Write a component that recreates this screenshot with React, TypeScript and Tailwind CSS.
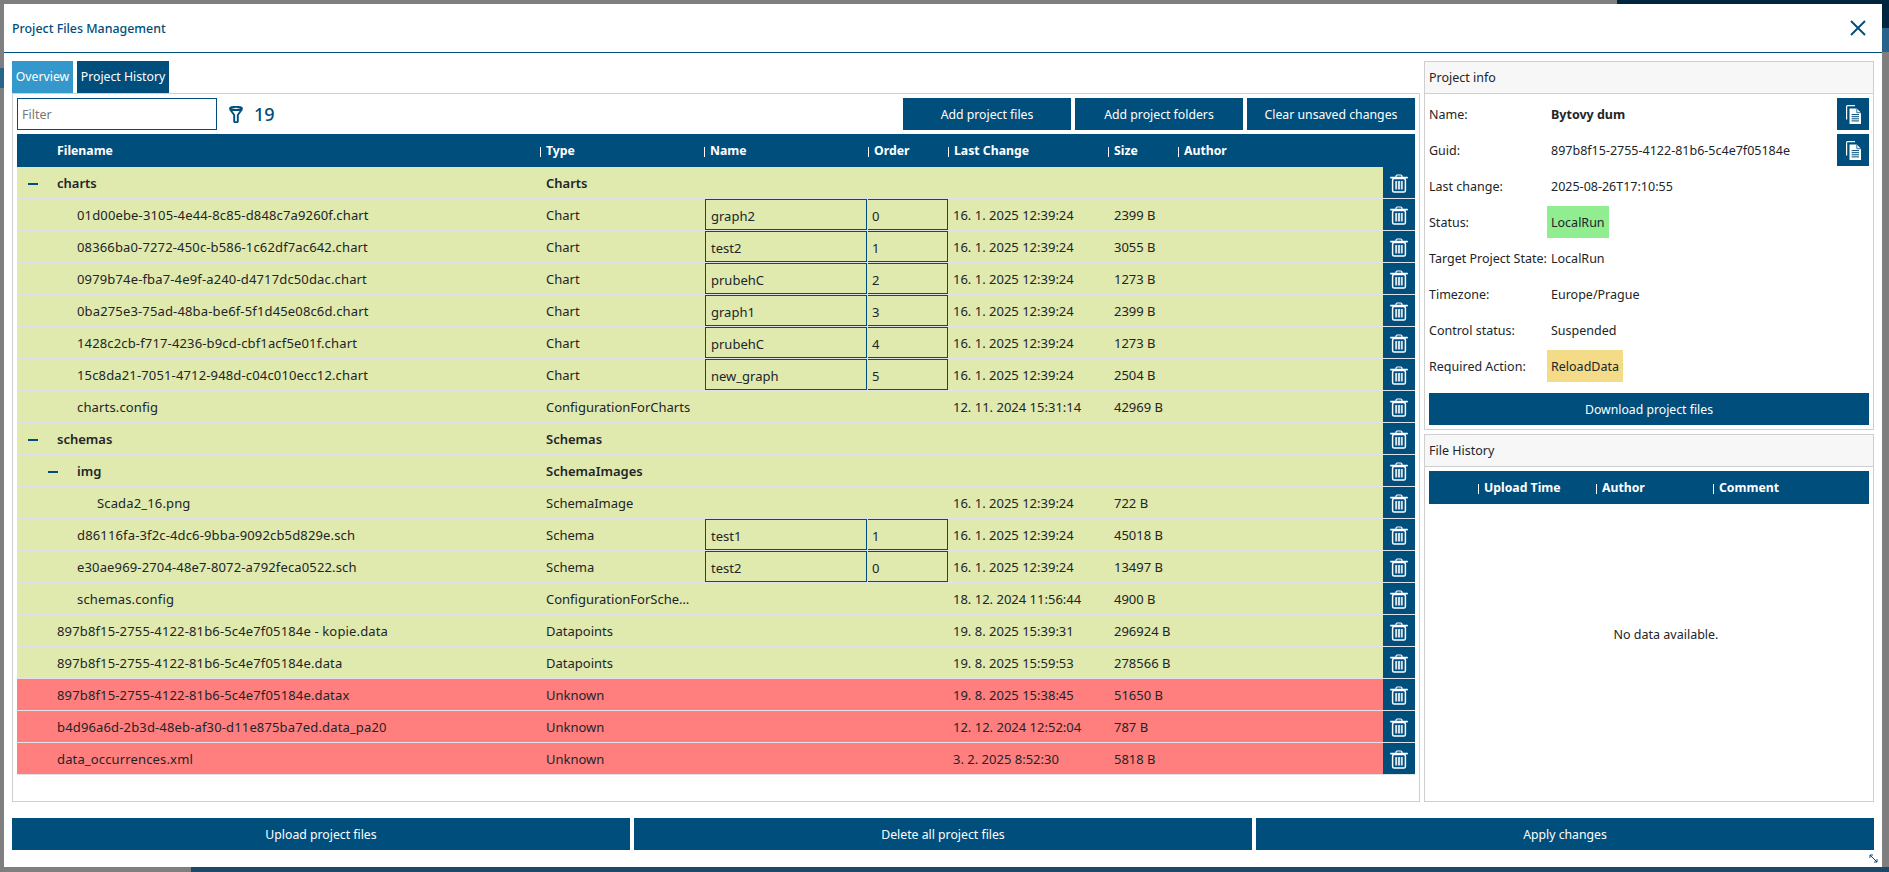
import { ReactNode } from 'react';

type Row = {
  file: string;
  type: string;
  depth: 0 | 1 | 2;
  folder?: boolean;
  name?: string;
  order?: number;
  date?: string;
  size?: string;
  bad?: boolean;
};

const rows: Row[] = [
  { file: 'charts', type: 'Charts', depth: 0, folder: true },
  { file: '01d00ebe-3105-4e44-8c85-d848c7a9260f.chart', type: 'Chart', depth: 1, name: 'graph2', order: 0, date: '16. 1. 2025 12:39:24', size: '2399 B' },
  { file: '08366ba0-7272-450c-b586-1c62df7ac642.chart', type: 'Chart', depth: 1, name: 'test2', order: 1, date: '16. 1. 2025 12:39:24', size: '3055 B' },
  { file: '0979b74e-fba7-4e9f-a240-d4717dc50dac.chart', type: 'Chart', depth: 1, name: 'prubehC', order: 2, date: '16. 1. 2025 12:39:24', size: '1273 B' },
  { file: '0ba275e3-75ad-48ba-be6f-5f1d45e08c6d.chart', type: 'Chart', depth: 1, name: 'graph1', order: 3, date: '16. 1. 2025 12:39:24', size: '2399 B' },
  { file: '1428c2cb-f717-4236-b9cd-cbf1acf5e01f.chart', type: 'Chart', depth: 1, name: 'prubehC', order: 4, date: '16. 1. 2025 12:39:24', size: '1273 B' },
  { file: '15c8da21-7051-4712-948d-c04c010ecc12.chart', type: 'Chart', depth: 1, name: 'new_graph', order: 5, date: '16. 1. 2025 12:39:24', size: '2504 B' },
  { file: 'charts.config', type: 'ConfigurationForCharts', depth: 1, date: '12. 11. 2024 15:31:14', size: '42969 B' },
  { file: 'schemas', type: 'Schemas', depth: 0, folder: true },
  { file: 'img', type: 'SchemaImages', depth: 1, folder: true },
  { file: 'Scada2_16.png', type: 'SchemaImage', depth: 2, date: '16. 1. 2025 12:39:24', size: '722 B' },
  { file: 'd86116fa-3f2c-4dc6-9bba-9092cb5d829e.sch', type: 'Schema', depth: 1, name: 'test1', order: 1, date: '16. 1. 2025 12:39:24', size: '45018 B' },
  { file: 'e30ae969-2704-48e7-8072-a792feca0522.sch', type: 'Schema', depth: 1, name: 'test2', order: 0, date: '16. 1. 2025 12:39:24', size: '13497 B' },
  { file: 'schemas.config', type: 'ConfigurationForSchemas', depth: 1, date: '18. 12. 2024 11:56:44', size: '4900 B' },
  { file: '897b8f15-2755-4122-81b6-5c4e7f05184e - kopie.data', type: 'Datapoints', depth: 0, date: '19. 8. 2025 15:39:31', size: '296924 B' },
  { file: '897b8f15-2755-4122-81b6-5c4e7f05184e.data', type: 'Datapoints', depth: 0, date: '19. 8. 2025 15:59:53', size: '278566 B' },
  { file: '897b8f15-2755-4122-81b6-5c4e7f05184e.datax', type: 'Unknown', depth: 0, date: '19. 8. 2025 15:38:45', size: '51650 B', bad: true },
  { file: 'b4d96a6d-2b3d-48eb-af30-d11e875ba7ed.data_pa20', type: 'Unknown', depth: 0, date: '12. 12. 2024 12:52:04', size: '787 B', bad: true },
  { file: 'data_occurrences.xml', type: 'Unknown', depth: 0, date: '3. 2. 2025 8:52:30', size: '5818 B', bad: true },
];

const info: { label: string; value: string; tone?: string; bold?: boolean; copy?: boolean }[] = [
  { label: 'Name:', value: 'Bytovy dum', bold: true, copy: true },
  { label: 'Guid:', value: '897b8f15-2755-4122-81b6-5c4e7f05184e', copy: true },
  { label: 'Last change:', value: '2025-08-26T17:10:55' },
  { label: 'Status:', value: 'LocalRun', tone: 'bg-[#90ee90]' },
  { label: 'Target Project State:', value: 'LocalRun' },
  { label: 'Timezone:', value: 'Europe/Prague' },
  { label: 'Control status:', value: 'Suspended' },
  { label: 'Required Action:', value: 'ReloadData', tone: 'bg-[#f4db87]' },
];

const columns = 'grid grid-cols-[523px_164px_164px_80px_160px_70px_205px_32px]';

function TrashIcon() {
  return (
    <svg width="18" height="19" viewBox="0 0 18 19" fill="none">
      <path d="M6 3V2.2C6 1.5 6.5 1 7.2 1h3.6c.7 0 1.2.5 1.2 1.2V3" stroke="#fff" strokeWidth="1.2" />
      <path d="M.8 3.6h16.4" stroke="#fff" strokeWidth="1.6" strokeLinecap="round" />
      <rect x="2.6" y="4.6" width="12.8" height="13.4" rx="1.6" stroke="#fff" strokeWidth="1.5" />
      <path d="M5.2 7h2v8.6h-2zM8 7h2v8.6H8zM10.8 7h2v8.6h-2z" fill="#d3e1ea" />
    </svg>
  );
}

function CopyIcon() {
  return (
    <svg width="15" height="19" viewBox="0 0 15 19" fill="none">
      <path d="M9 .6H1.6C1 .6.6 1 .6 1.6v12.8" stroke="#fff" strokeWidth="1.2" />
      <path d="M3.5 3.5h7.3l4.2 4.2V19H3.5z" fill="#fff" />
      <path d="M10.8 3.5v4.2H15" stroke="#004e7c" strokeWidth=".8" />
      <path d="M5.6 9.6h7.4M5.6 11.7h7.4M5.6 13.8h7.4M5.6 15.9h7.4" stroke="#004e7c" strokeWidth="1" />
    </svg>
  );
}

function FunnelIcon() {
  return (
    <svg width="14" height="17" viewBox="0 0 14 17" fill="none">
      <ellipse cx="7" cy="2.4" rx="6" ry="1.6" stroke="#004e7c" strokeWidth="1.9" />
      <path d="M1 3.2l4.2 5.8v6.2c0 .7.5 1.1 1.2 1.1h1.2c.7 0 1.2-.4 1.2-1.1V9L13 3.2" stroke="#004e7c" strokeWidth="1.9" />
    </svg>
  );
}

function CloseIcon() {
  return (
    <svg width="16" height="16" viewBox="0 0 16 16" fill="none">
      <path d="M1 1l14 14M15 1L1 15" stroke="#004e7c" strokeWidth="1.9" />
    </svg>
  );
}

function Resize() {
  return (
    <svg width="9" height="9" viewBox="0 0 9 9" fill="none">
      <path d="M1 1l7 7M1 1v3M1 1h3M8 8V5M8 8H5" stroke="#004e7c" strokeWidth="1" />
    </svg>
  );
}

function Button({ children, className }: { children: ReactNode; className: string }) {
  return (
    <button className={`h-8 pt-0.5 bg-[#004e7c] text-white text-[12.25px] flex items-center justify-center ${className}`}>
      {children}
    </button>
  );
}

function HeaderCell({ label }: { label: string }) {
  return (
    <div className="flex items-center font-bold pt-0.5">
      <span className="w-px h-2.5 bg-white mr-[5px]" />
      {label}
    </div>
  );
}

function FileRow({ row }: { row: Row }) {
  const indent = row.depth === 0 ? 'pl-10' : row.depth === 1 ? 'pl-[60px]' : 'pl-20';
  return (
    <div className={`${columns} h-8 border-b border-[#dfe3e6] text-[13px] text-[#212529] ${row.bad ? 'bg-[#ff7f7f]' : 'bg-[#e0e9ae]'}`}>
      {row.folder ? (
        <div className={`flex items-center pt-0.5 font-semibold ${row.depth === 0 ? 'pl-[11px]' : 'pl-[31px]'}`}>
          <span className="w-2.5 h-0.5 bg-[#004e7c] mr-[19px]" />
          {row.file}
        </div>
      ) : (
        <div className={`flex items-center pt-0.5 tracking-[0.15px] ${indent}`}>{row.file}</div>
      )}
      <div className={`flex items-center pt-0.5 pl-1.5 pr-2 min-w-0 ${row.folder ? 'font-semibold' : ''}`}>
        <span className="truncate">{row.type}</span>
      </div>
      <div className="flex px-px">
        {row.name && (
          <div className="flex-1 flex items-center pt-1 pl-[5px] border border-[#004e7c]">{row.name}</div>
        )}
      </div>
      <div className="flex">
        {row.order !== undefined && (
          <div className="flex-1 flex items-center pt-1 pl-1 border border-l-0 border-[#004e7c]">{row.order}</div>
        )}
      </div>
      <div className="flex items-center pt-0.5 pl-[5px]">{row.date}</div>
      <div className="flex items-center pt-0.5 pl-1.5 whitespace-nowrap">{row.size}</div>
      <div />
      <div className="bg-[#004e7c] flex items-center justify-center pt-px">
        <TrashIcon />
      </div>
    </div>
  );
}

function Panel({ title, children, className }: { title: string; children: ReactNode; className: string }) {
  return (
    <section className={`border border-[#cfcfcf] flex flex-col ${className}`}>
      <div className="h-8 shrink-0 pt-0.5 bg-[#f7f7f7] border-b border-[#cfcfcf] flex items-center pl-1 text-[12.5px] text-[#212529]">
        {title}
      </div>
      {children}
    </section>
  );
}

export default function App() {
  return (
    <div className="relative w-[1889px] h-[872px] overflow-hidden bg-[#7f7f7f] pt-1 pl-1 font-['Noto_Sans',sans-serif]">
      {/* what shows of the page behind the dialog */}
      <div className="absolute top-0 right-0 w-[272px] h-1 bg-[#00263f]" />
      <div className="absolute top-0 right-0 w-[7px] h-7 bg-[#00263f]" />
      <div className="absolute top-7 right-0 w-[7px] h-6 bg-[#27638a]" />
      <div className="absolute bottom-0 left-[191px] right-0 h-[5px] bg-[#1c4a66]" />
      <div className="absolute top-[68px] left-0 w-1 h-[20px] bg-[#27638a]" />

      <div className="relative w-[1878px] h-[863px] bg-white flex flex-col">
        <header className="h-12 shrink-0 border-b border-[#004e7c] flex items-center justify-between pl-2 pr-4 box-content">
          <h1 className="text-[12.4px] font-medium text-[#004e7c] pt-0.5">Project Files Management</h1>
          <CloseIcon />
        </header>

        <div className="flex gap-1 px-2 pt-2 h-[749px] shrink-0">
          <div className="w-[1408px] flex flex-col">
            <div className="flex gap-1 h-8 text-[12.25px] text-white">
              <div className="w-[61px] bg-[#3498cc] flex items-center justify-center">Overview</div>
              <div className="w-[92px] bg-[#004e7c] flex items-center justify-center">Project History</div>
            </div>
            <div className="flex-1 border border-[#cfcfcf] px-1 pt-1">
              <div className="flex items-center h-8">
                <input
                  placeholder="Filter"
                  className="w-[200px] h-8 border border-[#004e7c] px-1 text-[12.5px] placeholder:text-[#777] outline-none"
                />
                <div className="ml-3 flex items-center gap-[11px] text-[#004e7c] text-[18px] font-medium leading-none">
                  <FunnelIcon />
                  19
                </div>
                <div className="ml-auto flex gap-1">
                  <Button className="w-[168px]">Add project files</Button>
                  <Button className="w-[168px]">Add project folders</Button>
                  <Button className="w-[168px]">Clear unsaved changes</Button>
                </div>
              </div>
              <div className={`${columns} mt-1 h-[33px] bg-[#004e7c] text-white text-[12.25px]`}>
                <div className="flex items-center pt-0.5 pl-10 font-bold">Filename</div>
                <HeaderCell label="Type" />
                <HeaderCell label="Name" />
                <HeaderCell label="Order" />
                <HeaderCell label="Last Change" />
                <HeaderCell label="Size" />
                <HeaderCell label="Author" />
              </div>
              {rows.map((row, i) => (
                <FileRow key={i} row={row} />
              ))}
            </div>
          </div>

          <div className="w-[450px] flex flex-col gap-1">
            <Panel title="Project info" className="h-[369px]">
              <div className="flex flex-col gap-1 px-1 pt-1 text-[12.5px] text-[#212529]">
                {info.map((item) => (
                  <div key={item.label} className="flex items-center h-8">
                    <span className="w-[118px] shrink-0 whitespace-nowrap pt-0.5">{item.label}</span>
                    <span className={`h-8 flex items-center px-1 pt-0.5 ${item.tone ?? ''} ${item.bold ? 'font-bold' : ''}`}>
                      {item.value}
                    </span>
                    {item.copy && (
                      <button className="ml-auto w-8 h-8 bg-[#004e7c] flex items-center justify-center">
                        <CopyIcon />
                      </button>
                    )}
                  </div>
                ))}
                <Button className="w-full mt-[7px]">Download project files</Button>
              </div>
            </Panel>
            <Panel title="File History" className="flex-1">
              <div className="flex-1 flex flex-col px-1 pt-1">
                <div className="grid grid-cols-[49px_118px_117px_1fr] h-[33px] bg-[#004e7c] text-white text-[12.25px]">
                  <div />
                  <HeaderCell label="Upload Time" />
                  <HeaderCell label="Author" />
                  <HeaderCell label="Comment" />
                </div>
                <div className="flex-1 flex items-center justify-center pb-[34px] pl-[34px] text-[12.5px] text-[#212529]">
                  No data available.
                </div>
              </div>
            </Panel>
          </div>
        </div>

        <div className="flex gap-1 px-2 mt-4">
          <Button className="flex-1">Upload project files</Button>
          <Button className="flex-1">Delete all project files</Button>
          <Button className="flex-1">Apply changes</Button>
        </div>

        <div className="absolute right-1 bottom-1">
          <Resize />
        </div>
      </div>
    </div>
  );
}
